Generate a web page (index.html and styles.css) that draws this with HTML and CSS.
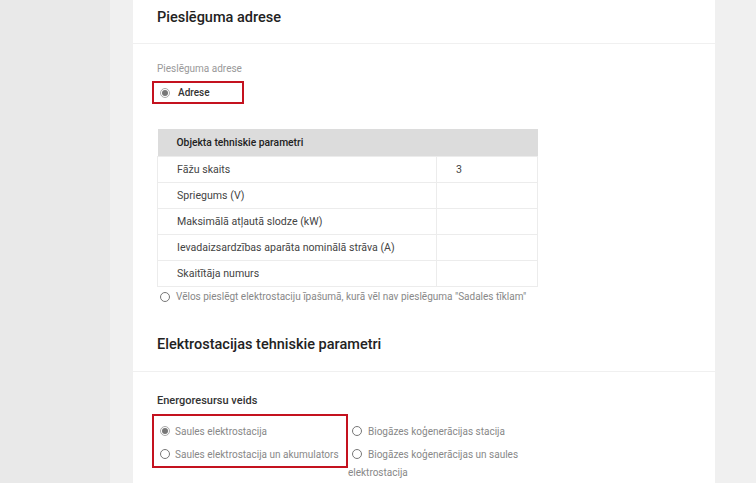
FILE: index.html
```html
<!DOCTYPE html>
<html lang="lv">
<head>
    <meta charset="UTF-8">
    <meta name="viewport" content="width=device-width, initial-scale=1.0">
    <title>Pieslēguma adrese</title>
    <link rel="stylesheet" href="styles.css">
</head>
<body>
    <div class="sidebar"></div>
    <div class="main">
        <div class="panel">
            <h2 class="section-head">Pieslēguma adrese</h2>
            <div class="section-body first">
                <div class="field-label">Pieslēguma adrese</div>
                <label class="choice boxed address">
                    <span class="radio checked"></span>Adrese
                </label>

                <table class="params">
                    <tr class="params-head">
                        <th colspan="2">Objekta tehniskie parametri</th>
                    </tr>
                    <tr><td>Fāžu skaits</td><td class="value">3</td></tr>
                    <tr><td>Spriegums (V)</td><td class="value"></td></tr>
                    <tr><td>Maksimālā atļautā slodze (kW)</td><td class="value"></td></tr>
                    <tr><td>Ievadaizsardzības aparāta nominālā strāva (A)</td><td class="value"></td></tr>
                    <tr><td>Skaitītāja numurs</td><td class="value"></td></tr>
                </table>

                <label class="choice muted no-connection">
                    <span class="radio"></span>Vēlos pieslēgt elektrostaciju īpašumā, kurā vēl nav pieslēguma "Sadales tīklam"
                </label>
            </div>

            <h2 class="section-head">Elektrostacijas tehniskie parametri</h2>
            <div class="section-body second">
                <div class="group-label">Energoresursu veids</div>
                <div class="options">
                    <div class="options-col boxed">
                        <label class="option"><span class="radio checked"></span>Saules elektrostacija</label>
                        <label class="option"><span class="radio"></span>Saules elektrostacija un akumulators</label>
                    </div>
                    <div class="options-col plain">
                        <label class="option"><span class="radio"></span>Biogāzes koģenerācijas stacija</label>
                        <label class="option"><span class="radio"></span>Biogāzes koģenerācijas un saules elektrostacija</label>
                    </div>
                </div>
            </div>
        </div>
    </div>
</body>
</html>
```

FILE: styles.css
```css
* {
    margin: 0;
    padding: 0;
    box-sizing: border-box;
}

body {
    font-family: Roboto, 'Liberation Sans', sans-serif;
    display: flex;
    height: 483px;
    overflow: hidden;
    background-color: #f0f0f0;
    color: #333;
}

.sidebar {
    width: 110px;
    flex-shrink: 0;
    background-color: #e9e9e9;
}

.main {
    flex: 1;
    padding-left: 23px;
}

.panel {
    width: 582px;
    background-color: #fff;
    margin-top: -9px;
    min-height: 600px;
}

.section-head {
    height: 53px;
    padding: 0 24px;
    display: flex;
    align-items: center;
    font-size: 14.5px;
    font-weight: 500;
    color: #222;
    border-bottom: 1px solid #f0f0f0;
}

.section-body {
    padding: 0 24px;
}

.section-body.first {
    padding-top: 18px;
    padding-bottom: 13px;
}

.section-body.second {
    padding-top: 22px;
}

.field-label {
    font-size: 10px;
    line-height: 14px;
    color: #999;
    margin-bottom: 5px;
}

.boxed {
    border: 2px solid #c4121f;
}

.choice {
    display: flex;
    align-items: center;
    font-size: 10px;
}

.address {
    width: 92px;
    height: 23px;
    margin-left: -5px;
    padding-left: 6px;
    font-weight: 500;
    color: #333;
}

.address .radio {
    margin-right: 8px;
}

.radio {
    display: inline-block;
    width: 10px;
    height: 10px;
    border: 1px solid #777;
    border-radius: 50%;
    background-color: #fff;
    flex-shrink: 0;
    vertical-align: -1px;
    position: relative;
}

.radio.checked {
    border-color: #aaa;
    background-color: #fff;
}

.radio.checked::after {
    content: "";
    position: absolute;
    left: 1px;
    top: 1px;
    width: 6px;
    height: 6px;
    border-radius: 50%;
    background-color: #777;
}

.params {
    width: 381px;
    margin-top: 25px;
    border-collapse: collapse;
    font-size: 10.6px;
}

.params th {
    background-color: #dcdcdc;
    height: 27px;
    text-align: left;
    padding: 0 19px;
    font-size: 10.3px;
    font-weight: 500;
    color: #222;
}

.params td {
    height: 26px;
    padding: 0 19px;
    border: 1px solid #ececec;
    color: #444;
}

.params td.value {
    width: 101px;
}

.muted {
    color: #888;
}

.no-connection {
    height: 18px;
    margin-top: 1px;
    margin-left: 3px;
}

.no-connection .radio {
    margin-right: 6px;
}

.group-label {
    font-size: 11px;
    line-height: 14px;
    font-weight: 500;
    color: #333;
    margin-bottom: 6px;
}

.options {
    display: flex;
    align-items: flex-start;
    margin-left: -5px;
}

.options-col {
    display: flex;
    flex-direction: column;
    gap: 5px;
}

.options-col.boxed {
    width: 196px;
    padding: 7px 0 2px 6px;
}

.options-col.plain {
    width: 180px;
    padding-top: 9px;
}

.option {
    font-size: 10px;
    line-height: 18px;
    color: #888;
}

.options-col.boxed .radio {
    margin-right: 5px;
}

.options-col.plain .radio {
    margin-left: 4px;
    margin-right: 6px;
}
```
